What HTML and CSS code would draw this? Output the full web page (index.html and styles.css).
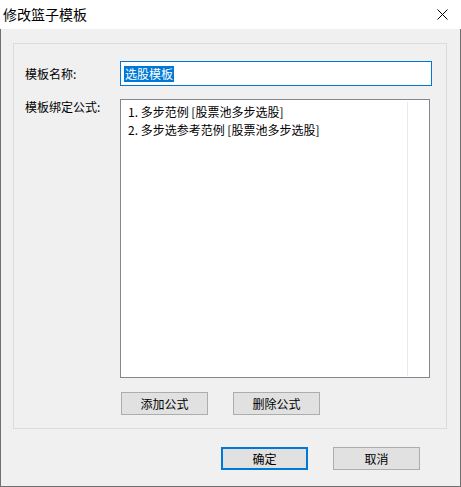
FILE: index.html
```html
<!DOCTYPE html>
<html>
<head lang="zh">
    <meta charset="UTF-8">
    <title>修改篮子模板</title>
    <link rel="stylesheet" href="styles.css">
</head>
<body>
    <div class="window">
        <div class="titlebar">
            <span class="title">修改篮子模板</span>
            <span class="close">
                <svg width="11" height="11" viewBox="0 0 11 11">
                    <path d="M0.5 0.5 L10.5 10.5 M10.5 0.5 L0.5 10.5" stroke="#000" stroke-width="1" fill="none"/>
                </svg>
            </span>
        </div>

        <div class="client">
            <div class="group">
                <div class="row row-name">
                    <div class="label">模板名称:</div>
                    <div class="textbox"><span class="sel">选股模板</span></div>
                </div>
                <div class="row row-list">
                    <div class="label label-top">模板绑定公式:</div>
                    <div class="listbox">
                        <ul class="items">
                            <li>1. 多步范例 [股票池多步选股]</li>
                            <li>2. 多步选参考范例 [股票池多步选股]</li>
                        </ul>
                        <div class="side"></div>
                    </div>
                </div>
                <div class="row row-btns">
                    <div class="label"></div>
                    <div class="btns">
                        <span class="btn">添加公式</span>
                        <span class="btn">删除公式</span>
                    </div>
                </div>
            </div>

            <div class="footer">
                <span class="btn btn-default">确定</span>
                <span class="btn">取消</span>
            </div>
        </div>
    </div>
</body>
</html>
```

FILE: styles.css
```css
*{
    padding: 0;
    margin: 0;
    box-sizing: border-box;
}
ul{
    list-style: none;
}
body{
    font-family: "Noto Sans CJK SC", "Liberation Sans", sans-serif;
    font-size: 12px;
    color: #000;
    background: #f0f0f0;
}
.window{
    width: 461px;
    height: 487px;
    display: flex;
    flex-direction: column;
}
.titlebar{
    height: 29px;
    background: #fff;
    display: flex;
    align-items: center;
    justify-content: space-between;
    padding-left: 3px;
    padding-right: 13px;
}
.title{
    font-size: 14px;
    line-height: 16px;
    margin-top: -1px;
}
.close{
    display: flex;
    margin-top: -1px;
}
.client{
    flex: 1;
    background: #f0f0f0;
    border: 1px solid #707070;
    border-top: 0;
    padding-top: 14px;
}
.group{
    width: 434px;
    margin-left: 12px;
    border: 1px solid #dcdcdc;
    padding: 17px 14px 13px 11px;
    display: flex;
    flex-direction: column;
}
.row{
    display: flex;
}
.row-name{
    align-items: center;
    height: 25px;
}
.row-list{
    margin-top: 13px;
}
.row-btns{
    margin-top: 14px;
}
.label{
    width: 95px;
    flex: none;
    line-height: 16px;
}
.label-top{
    padding-top: 0;
}
.textbox{
    flex: 1;
    height: 25px;
    border: 1px solid #0078d7;
    background: #fff;
    padding-left: 3px;
    display: flex;
    align-items: center;
}
.sel{
    background: #0078d7;
    color: #fff;
    line-height: 16px;
    padding: 0 1px;
}
.listbox{
    width: 310px;
    height: 279px;
    border: 1px solid #828790;
    background: #fff;
    display: flex;
}
.items{
    width: 286px;
    padding: 3px 0 0 7px;
}
.items li{
    line-height: 18px;
    white-space: nowrap;
}
.side{
    flex: 1;
    margin: 2px 0 1px;
    border-left: 1px solid #e3ebf3;
}
.btns{
    display: flex;
    gap: 25px;
    margin-left: 1px;
}
.btn{
    width: 87px;
    height: 23px;
    background: #e1e1e1;
    border: 1px solid #adadad;
    display: flex;
    align-items: center;
    justify-content: center;
    line-height: 16px;
}
.btn-default{
    border: 2px solid #0078d7;
}
.footer{
    display: flex;
    justify-content: flex-end;
    gap: 25px;
    margin-top: 18px;
    padding-right: 40px;
}
```
